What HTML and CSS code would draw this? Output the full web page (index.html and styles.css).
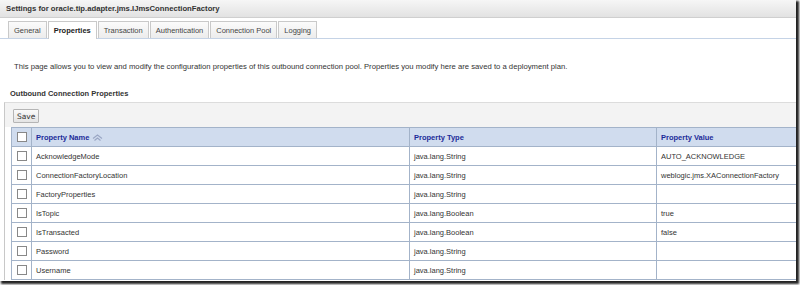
FILE: index.html
```html
<!DOCTYPE html>
<html>
<head>
<meta charset="utf-8">
<link rel="stylesheet" href="styles.css">
</head>
<body>
<div class="frame">
  <div class="titlebar">Settings for oracle.tip.adapter.jms.IJmsConnectionFactory</div>
  <div class="tabs">
    <span class="tab">General</span>
    <span class="tab active">Properties</span>
    <span class="tab">Transaction</span>
    <span class="tab">Authentication</span>
    <span class="tab">Connection Pool</span>
    <span class="tab">Logging</span>
  </div>
  <p class="desc">This page allows you to view and modify the configuration properties of this outbound connection pool. Properties you modify here are saved to a deployment plan.</p>
  <div class="section">
    <h3 class="section-title">Outbound Connection Properties</h3>
    <div class="panel">
      <div class="toolbar"><button class="btn">Save</button></div>
      <table class="grid">
        <colgroup>
          <col class="c-check"><col class="c-name"><col class="c-type"><col class="c-value">
        </colgroup>
        <thead>
          <tr>
            <th><span class="cb"></span></th>
            <th>Property Name <svg class="sort" width="11" height="7" viewBox="0 0 11 7"><path d="M1 4.5 L5.5 1 L10 4.5 M2.5 6.5 L5.5 4 L8.5 6.5" fill="none" stroke="#9aa6c4" stroke-width="1.1"/></svg></th>
            <th>Property Type</th>
            <th>Property Value</th>
          </tr>
        </thead>
        <tbody>
          <tr><td><span class="cb"></span></td><td>AcknowledgeMode</td><td>java.lang.String</td><td>AUTO_ACKNOWLEDGE</td></tr>
          <tr><td><span class="cb"></span></td><td>ConnectionFactoryLocation</td><td>java.lang.String</td><td>weblogic.jms.XAConnectionFactory</td></tr>
          <tr><td><span class="cb"></span></td><td>FactoryProperties</td><td>java.lang.String</td><td></td></tr>
          <tr><td><span class="cb"></span></td><td>IsTopic</td><td>java.lang.Boolean</td><td>true</td></tr>
          <tr><td><span class="cb"></span></td><td>IsTransacted</td><td>java.lang.Boolean</td><td>false</td></tr>
          <tr><td><span class="cb"></span></td><td>Password</td><td>java.lang.String</td><td></td></tr>
          <tr><td><span class="cb"></span></td><td>Username</td><td>java.lang.String</td><td></td></tr>
        </tbody>
      </table>
    </div>
  </div>
</div>
</body>
</html>
```
FILE: styles.css
```css
html, body {
  margin: 0;
  padding: 0;
  background: #ffffff;
}
body {
  width: 800px;
  height: 285px;
  overflow: hidden;
  font-family: "Liberation Sans", Arial, sans-serif;
  font-size: 8px;
  color: #222;
}
.frame {
  width: 796px;
  height: 281px;
  background: #fff;
  box-shadow: 2px 2px 2px 1px #222;
  overflow: hidden;
  position: relative;
}
.titlebar {
  height: 17px;
  line-height: 17px;
  padding-left: 6px;
  font-weight: bold;
  font-size: 7.7px;
  color: #333;
  background: linear-gradient(#f6f6f6, #e2e2e2);
  border-bottom: 1px solid #cfcfcf;
}
.tabs {
  display: flex;
  padding: 3px 0 0 8px;
  height: 17px;
  border-bottom: 1px solid #c5d3e6;
}
.tab {
  display: flex;
  align-items: center;
  padding: 0 5px;
  height: 16px;
  margin-right: 1px;
  border: 1px solid #c9c9c9;
  border-bottom: none;
  background: linear-gradient(#fbfbfb, #ececec);
  color: #444;
  font-size: 7.5px;
}
.tab.active {
  background: #fff;
  font-weight: bold;
  color: #222;
  height: 17px;
  margin-bottom: -1px;
}
.desc {
  margin: 23px 0 0 14px;
  font-size: 7.7px;
  color: #333;
  line-height: 9px;
}
.section {
  margin-top: 18px;
}
.section-title {
  margin: 0 0 4px 10px;
  font-size: 7.5px;
  font-weight: bold;
  color: #333;
  line-height: 9px;
}
.panel {
  margin-left: 4px;
  border-left: 1px solid #c8c8c8;
  border-top: 1px solid #dcdcdc;
}
.toolbar {
  background: #f3f3f3;
  padding: 6px 0 4px 8px;
}
.btn {
  font-family: "DejaVu Sans", sans-serif;
  font-size: 7.5px;
  color: #333;
  padding: 1px 3px;
  height: 14px;
  background: linear-gradient(#fafafa, #e4e4e4);
  border: 1px solid #b5b5b5;
  border-radius: 1px;
}
.grid {
  margin-left: 6px;
  border-collapse: collapse;
  width: 787px;
  table-layout: fixed;
  border: 1px solid #a3b3c9;
}
.c-check { width: 20px; }
.c-name { width: 378px; }
.c-type { width: 247px; }
.c-value { width: auto; }
.grid th, .grid td {
  border: 1px solid #a3b3c9;
  height: 18px;
  padding: 0 0 0 4px;
  text-align: left;
  white-space: nowrap;
  overflow: hidden;
}
.grid th {
  background: #d0dcee;
  color: #1c2b99;
  font-weight: bold;
  font-size: 7.5px;
}
.grid td {
  font-size: 7.5px;
  color: #333;
  background: #fff;
}
.grid td:first-child, .grid th:first-child {
  padding-left: 5px;
}
.cb {
  display: block;
  width: 8px;
  height: 8px;
  border: 1px solid #888;
  background: #fff;
}
.sort {
  vertical-align: -1px;
  margin-left: 1px;
}
```
